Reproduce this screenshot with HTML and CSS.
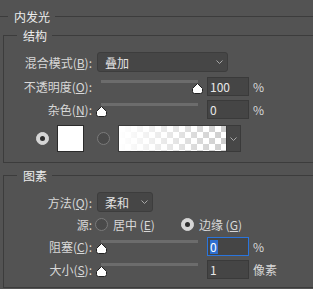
FILE: index.html
```html
<!DOCTYPE html>
<html lang="zh-CN">
<head>
    <meta charset="UTF-8">
    <title>内发光</title>
    <link rel="stylesheet" href="styles.css">
</head>
<body>
    <div class="panel">
        <div class="legend"><span>内发光</span></div>

        <section class="group group-struct">
            <div class="legend"><span>结构</span></div>

            <div class="row row-select">
                <label class="lbl">混合模式(<u>B</u>):</label>
                <div class="select select-blend">
                    <span>叠加</span>
                    <svg class="chev" width="7" height="4" viewBox="0 0 7 4"><polyline points="0.5,0.5 3.5,3.5 6.5,0.5"/></svg>
                </div>
            </div>

            <div class="row row-first">
                <label class="lbl">不透明度(<u>O</u>):</label>
                <div class="slider">
                    <div class="track"></div>
                    <svg class="thumb" style="left: 96px" width="11" height="11" viewBox="0 0 11 11"><path d="M5.5 0.5 L10.5 5.5 V8.5 Q10.5 10.5 8.5 10.5 H2.5 Q0.5 10.5 0.5 8.5 V5.5 Z"/></svg>
                </div>
                <div class="num">100</div>
                <span class="unit">%</span>
            </div>

            <div class="row">
                <label class="lbl">杂色(<u>N</u>):</label>
                <div class="slider">
                    <div class="track"></div>
                    <svg class="thumb" style="left: 0px" width="11" height="11" viewBox="0 0 11 11"><path d="M5.5 0.5 L10.5 5.5 V8.5 Q10.5 10.5 8.5 10.5 H2.5 Q0.5 10.5 0.5 8.5 V5.5 Z"/></svg>
                </div>
                <div class="num">0</div>
                <span class="unit">%</span>
            </div>

            <div class="row row-color">
                <div class="radio on radio-solid"></div>
                <div class="swatch"></div>
                <div class="radio radio-grad"></div>
                <div class="gradient"></div>
                <div class="grad-arrow">
                    <svg class="chev" width="7" height="4" viewBox="0 0 7 4"><polyline points="0.5,0.5 3.5,3.5 6.5,0.5"/></svg>
                </div>
            </div>
        </section>

        <section class="group group-elem">
            <div class="legend"><span>图素</span></div>

            <div class="row row-select">
                <label class="lbl">方法(<u>Q</u>):</label>
                <div class="select select-method">
                    <span>柔和</span>
                    <svg class="chev" width="7" height="4" viewBox="0 0 7 4"><polyline points="0.5,0.5 3.5,3.5 6.5,0.5"/></svg>
                </div>
            </div>

            <div class="row row-src">
                <label class="lbl">源:</label>
                <div class="radio radio-center"></div>
                <span class="opt">居中 (<u>E</u>)</span>
                <div class="radio on radio-edge"></div>
                <span class="opt">边缘 (<u>G</u>)</span>
            </div>

            <div class="row">
                <label class="lbl">阻塞(<u>C</u>):</label>
                <div class="slider">
                    <div class="track"></div>
                    <svg class="thumb" style="left: 0px" width="11" height="11" viewBox="0 0 11 11"><path d="M5.5 0.5 L10.5 5.5 V8.5 Q10.5 10.5 8.5 10.5 H2.5 Q0.5 10.5 0.5 8.5 V5.5 Z"/></svg>
                </div>
                <div class="num focus"><span class="sel">0</span></div>
                <span class="unit">%</span>
            </div>

            <div class="row">
                <label class="lbl">大小(<u>S</u>):</label>
                <div class="slider">
                    <div class="track"></div>
                    <svg class="thumb" style="left: 0px" width="11" height="11" viewBox="0 0 11 11"><path d="M5.5 0.5 L10.5 5.5 V8.5 Q10.5 10.5 8.5 10.5 H2.5 Q0.5 10.5 0.5 8.5 V5.5 Z"/></svg>
                </div>
                <div class="num">1</div>
                <span class="unit">像素</span>
            </div>
        </section>
    </div>
</body>
</html>
```

FILE: styles.css
```css
body {
    margin: 0;
    background-color: #535353;
    font-family: "Noto Sans CJK SC", "Noto Sans", sans-serif;
    font-size: 12px;
    color: #d8d8d8;
}
.panel {
    width: 313px;
    height: 289px;
    padding-top: 8px;
    box-sizing: border-box;
    overflow: hidden;
}
u {
    text-decoration: underline;
    text-underline-offset: 1px;
}

/* group titles with a rule on both sides */
.legend {
    display: flex;
    align-items: center;
    height: 17px;
    line-height: 17px;
    color: #ececec;
}
.legend::before,
.legend::after {
    content: "";
    height: 1px;
    background-color: #3c3c3c;
}
.legend::before {
    width: 8px;
}
.legend::after {
    flex: 1;
}
.legend span {
    padding: 0 5px 0 6px;
}
.group {
    display: flex;
    flex-direction: column;
    margin-left: 3px;
    border-left: 1px solid #3c3c3c;
    border-bottom: 1px solid #3c3c3c;
}
.group .legend {
    margin-top: -8px;
}
.group .legend::before {
    width: 13px;
}
.group-struct {
    margin-top: 10px;
    padding-bottom: 10px;
}
.group-elem {
    margin-top: 12px;
    padding-bottom: 6px;
}

/* rows */
.row {
    display: flex;
    align-items: center;
    height: 23px;
}
.row-select {
    height: 22px;
    margin-top: 7px;
}
.row-first {
    margin-top: 2px;
}
.lbl {
    flex-shrink: 0;
    width: 88px;
    margin-right: 4px;
    text-align: right;
    white-space: nowrap;
}

/* dropdowns */
.select {
    display: flex;
    align-items: center;
    height: 20px;
    box-sizing: border-box;
    margin-left: 1px;
    padding: 0 4px 0 7px;
    background-color: #464646;
    border: 1px solid #3d3d3d;
    border-radius: 3px;
    color: #e2e2e2;
}
.select span {
    flex: 1;
}
.select-blend {
    width: 131px;
}
.select-method {
    width: 56px;
}
.chev polyline {
    fill: none;
    stroke: #a8a8a8;
    stroke-width: 1;
}

/* sliders */
.slider {
    position: relative;
    flex-shrink: 0;
    align-self: stretch;
    width: 107px;
}
.track {
    height: 3px;
    margin: 5px 5px 0;
    background-color: #6c6c6c;
}
.thumb {
    position: absolute;
    top: 8px;
}
.thumb path {
    fill: #fff;
    stroke: #222;
    stroke-width: 1;
}
.num {
    width: 42px;
    height: 19px;
    box-sizing: border-box;
    margin-left: 4px;
    padding-left: 2px;
    line-height: 17px;
    background-color: #454545;
    border: 1px solid #3a3a3a;
    color: #e8e8e8;
}
.num.focus {
    border-color: #2a75dd;
}
.sel {
    display: inline-block;
    padding: 0 1px 0 0;
    line-height: 14px;
    background-color: #2e6fd0;
    color: #fff;
}
.unit {
    margin-left: 4px;
}

/* colour choice */
.row-color {
    height: 27px;
    margin-top: 4px;
}
.radio {
    flex-shrink: 0;
    width: 13px;
    height: 13px;
    box-sizing: border-box;
    border-radius: 50%;
    border: 1px solid #7a7a7a;
    background-color: #4a4a4a;
}
.radio.on {
    display: flex;
    align-items: center;
    justify-content: center;
    background-color: #d6d6d6;
    border-color: #d6d6d6;
}
.radio.on::after {
    content: "";
    width: 5px;
    height: 5px;
    border-radius: 50%;
    background-color: #2e2e2e;
}
.radio-solid {
    margin-left: 32px;
}
.swatch {
    width: 27px;
    height: 27px;
    box-sizing: border-box;
    margin-left: 8px;
    background-color: #fff;
    border: 1px solid #2b2b2b;
}
.radio-grad {
    margin-left: 13px;
}
.gradient {
    width: 109px;
    height: 27px;
    box-sizing: border-box;
    margin-left: 8px;
    border: 1px solid #3a3a3a;
    background:
        linear-gradient(to right, #fff, rgba(255, 255, 255, 0)),
        repeating-conic-gradient(#cdcdcd 0 25%, #fff 0 50%) 0 0 / 12px 12px;
}
.grad-arrow {
    display: flex;
    align-items: center;
    justify-content: center;
    width: 14px;
    height: 27px;
    box-sizing: border-box;
    background-color: #474747;
    border: 1px solid #3a3a3a;
    border-left: none;
}

/* source options */
.row-src {
    height: 22px;
}
.radio-center {
    margin-left: -1px;
}
.opt {
    margin-left: 5px;
    white-space: nowrap;
}
.radio-edge {
    margin-left: 26px;
}
```
